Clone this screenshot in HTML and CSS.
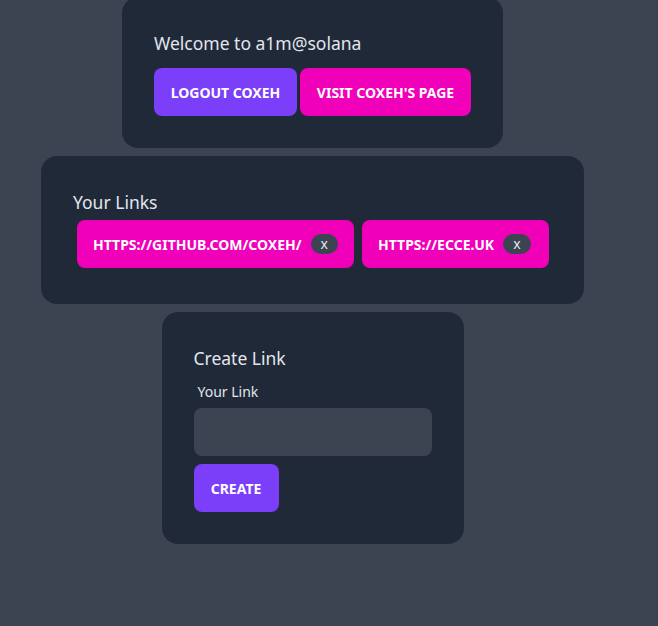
FILE: index.html
```html
<!DOCTYPE html>
<html>
<head>
<meta charset="utf-8">
<link rel="stylesheet" href="styles.css">
</head>
<body>
<div class="page">
  <div class="card card-welcome">
    <h2 class="card-title">Welcome to a1m@solana</h2>
    <div class="actions">
      <button class="btn btn-primary w-logout">Logout coxeh</button>
      <button class="btn btn-secondary w-visit">Visit coxeh's page</button>
    </div>
  </div>

  <div class="card card-links">
    <h2 class="card-title">Your Links</h2>
    <div class="links">
      <a class="btn btn-secondary link w-github">https://github.com/coxeh/ <span class="badge">x</span></a>
      <a class="btn btn-secondary link w-ecce">https://ecce.uk <span class="badge">x</span></a>
    </div>
  </div>

  <div class="card card-create">
    <h2 class="card-title">Create Link</h2>
    <label class="label">Your Link</label>
    <input class="input" type="text">
    <button class="btn btn-primary w-create">Create</button>
  </div>
</div>
</body>
</html>
```

FILE: styles.css
```css
* { box-sizing: border-box; }
html, body {
  margin: 0;
  padding: 0;
  background: #3d4451;
  height: 100%;
  overflow: hidden;
}
body {
  font-family: "Noto Sans", "Open Sans", sans-serif;
  color: #e2e6ee;
}
.page {
  width: 625px;
  display: flex;
  flex-direction: column;
  align-items: center;
  gap: 8px;
  margin-top: -3px;
}
.card {
  background: #202938;
  border-radius: 16px;
  padding: 32px;
}
.card-welcome { width: 381px; }
.card-links { width: 543px; padding-right: 31px; }
.card-create { width: 302px; display: flex; flex-direction: column; align-items: flex-start; }
.card-title {
  margin: 0;
  font-size: 17.5px;
  font-weight: 400;
  line-height: 28px;
}
.card-welcome .card-title { margin-bottom: 11px; }
.card-links .card-title { margin-bottom: 0; }
.card-create .card-title { margin-bottom: 4px; }
.actions { display: flex; gap: 3px; }
.btn {
  display: inline-flex;
  align-items: center;
  justify-content: center;
  height: 48px;
  padding: 0 16px;
  border: none;
  border-radius: 8px;
  font-family: inherit;
  font-size: 14px;
  font-weight: 700;
  text-transform: uppercase;
  color: #fff;
  text-decoration: none;
  white-space: nowrap;
}
.btn-primary { background: #7b3ef9; }
.btn-secondary { background: #f000b8; }
.w-logout { width: 143px; }
.w-visit { width: 171px; }
.w-github { width: 277px; }
.w-ecce { width: 187px; }
.w-create { width: 85px; }
.links { display: flex; }
.link { margin: 4px; gap: 9px; justify-content: flex-start; }
.badge {
  display: inline-flex;
  align-items: center;
  justify-content: center;
  width: 28px;
  height: 20px;
  border-radius: 10px;
  background: #3d4451;
  color: #e2e6ee;
  font-size: 14px;
  font-weight: 400;
  text-transform: none;
  line-height: 1;
  padding-bottom: 1px;
}
.label {
  font-size: 14px;
  line-height: 20px;
  padding: 6px 4px 0;
  margin-bottom: 6px;
}
.input {
  width: 238px;
  height: 48px;
  border: none;
  border-radius: 8px;
  background: #3d4451;
  margin-bottom: 8px;
  outline: none;
}
```
